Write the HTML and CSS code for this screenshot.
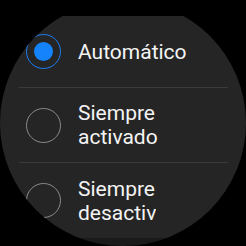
FILE: index.html
```html
<!DOCTYPE html>
<html lang="es">
<head>
<meta charset="utf-8">
<link rel="stylesheet" href="styles.css">
</head>
<body>
<div class="watch">
  <div class="header"></div>
  <div class="list">
    <div class="row row-first">
      <span class="radio radio-on"><span class="dot"></span></span>
      <div class="label">Automático</div>
    </div>
    <div class="divider"></div>
    <div class="row row-mid">
      <span class="radio"></span>
      <div class="label">Siempre<br>activado</div>
    </div>
    <div class="divider"></div>
    <div class="row row-last">
      <span class="radio"></span>
      <div class="label label-clip">Siempre<br>desactivado</div>
    </div>
  </div>
  <div class="footer"></div>
</div>
</body>
</html>
```
FILE: styles.css
```css
html, body {
  margin: 0;
  padding: 0;
  background: #000;
}
body {
  width: 246px;
  height: 246px;
  overflow: hidden;
}
.watch {
  width: 246px;
  height: 246px;
  border-radius: 50%;
  overflow: hidden;
  background: #000;
  display: flex;
  flex-direction: column;
  font-family: Roboto, "Noto Sans", sans-serif;
}
.header {
  height: 16px;
  flex: none;
  background: #000;
}
.list {
  background: #252525;
  flex: none;
  height: 222px;
  display: flex;
  flex-direction: column;
}
.footer {
  flex: 1;
  background: #1a1a1a;
}
.row {
  display: flex;
  align-items: center;
  padding-left: 26px;
  gap: 17px;
  flex: none;
}
.row-first { height: 71px; }
.row-mid { height: 74px; }
.row-last { height: 75px; }
.divider {
  height: 1px;
  margin: 0 18px 0 19px;
  background: #3a3a3a;
  flex: none;
}
.radio {
  width: 33px;
  height: 33px;
  border: 1.5px solid #8a8a8a;
  border-radius: 50%;
  flex: none;
  display: flex;
  align-items: center;
  justify-content: center;
}
.radio-on {
  border-color: #1a7ff5;
}
.dot {
  width: 19px;
  height: 19px;
  border-radius: 50%;
  background: #1583fb;
}
.label {
  color: #f4f4f4;
  font-size: 21px;
  line-height: 24px;
  white-space: nowrap;
}
.label-clip {
  width: 78px;
  overflow: hidden;
}
```
